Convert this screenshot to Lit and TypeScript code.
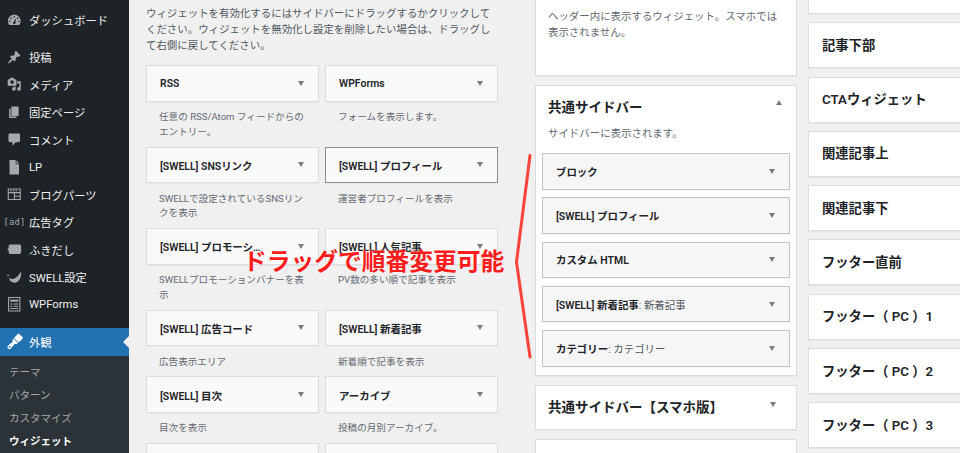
import { LitElement, html, css, svg } from "lit";
import { customElement } from "lit/decorators.js";

const P: Record<string, any> = {
  dash: svg`<path fill-rule="evenodd" d="M3.300 16.600C2 15.100 1.200 13.100 1.200 11 1.200 6.100 5.100 2.500 10 2.500s8.800 3.600 8.800 8.500c0 2.100-.8 4.100-2.100 5.600zM10 4a1.100 1.100 0 1 0 0 2.200A1.100 1.100 0 0 0 10 4zM5.300 6a1.100 1.100 0 1 0 0 2.200 1.100 1.100 0 0 0 0-2.200zM14.700 6a1.100 1.100 0 1 0 0 2.200 1.100 1.100 0 0 0 0-2.200zM3.500 10.200a1.100 1.100 0 1 0 0 2.200 1.100 1.100 0 0 0 0-2.200zM16.500 10.200a1.100 1.100 0 1 0 0 2.200 1.100 1.100 0 0 0 0-2.200zM12.600 7.200l-3.300 4.700a1.800 1.800 0 1 0 2.400.9z"/>`,
  pin: svg`<path d="M10.440 3.020l1.820-1.820 6.360 6.350-1.830 1.820c-1.050-.68-2.480-.57-3.410.36l-.75.75c-.92.93-1.040 2.350-.35 3.410l-1.830 1.820-2.410-2.410-2.800 2.790c-.42.42-3.380 2.710-3.800 2.290s1.860-3.390 2.280-3.810l2.790-2.790L4.100 9.360l1.830-1.820c1.050.69 2.480.57 3.400-.36l.75-.75c.93-.92 1.050-2.350.36-3.410z"/>`,
  media: svg`<path fill-rule="evenodd" d="M13 11V4c0-.55-.45-1-1-1h-1.670L9 1H5L3.670 3H2c-.55 0-1 .45-1 1v7c0 .55.45 1 1 1h10c.55 0 1-.45 1-1zM7 4.500a2.500 2.500 0 1 1 0 5 2.500 2.500 0 0 1 0-5zM14 6h5v10.500a2.500 2.500 0 1 1-2-2.450V9h-3V6zm-4 8.050V13h2v3.500a2.500 2.500 0 1 1-2-2.450z"/>`,
  page: svg`<path d="M6 15V2h10v13H6zm-1 1h8v2H3V5h2v11z"/>`,
  comment: svg`<path d="M4 2h12c1.100 0 2 .9 2 2v8c0 1.100-.9 2-2 2h-4l-4.500 5v-5H4c-1.100 0-2-.9-2-2V4c0-1.100.9-2 2-2z"/>`,
  doc: svg`<path d="M3.500 0h8.500v6h4.500v14h-13zM13 .4L16.500 4.800H13z"/>`,
  parts: svg`<path fill-rule="evenodd" d="M1 2h18v16H1zM2.500 3.500V7h15V3.500zM4.200 4.500h2.500V6H4.200zM8 4.500h2.500V6H8zM11.800 4.500h2.500V6h-2.500zM2.500 8.500v8h7v-8zM11 8.500V12h6.500V8.500zM11 13.500v3h6.500v-3z"/>`,
  bubble: svg`<path d="M4.500 3.500h12.800c1.200 0 2.200 1 2.200 2.200v8.600c0 1.200-1 2.200-2.200 2.200H4.500c-1.200 0-2.200-1-2.200-2.200v-2.800L0 10l2.300-1.500V5.700c0-1.200 1-2.200 2.200-2.200z"/>`,
  swell: svg`<path d="M19.500 2c.8 7.300-2.500 15.500-9.500 15.500-4 0-6.800-3-7-7 2 1.800 4.900 2.300 7.500 1.100C14 10 16.700 6.200 19.500 2zM1.400 6.200a1.200 1.200 0 1 1 0 2.400 1.200 1.200 0 0 1 0-2.400z"/>`,
  wpf: svg`<path fill-rule="evenodd" d="M1.500 0h17v20h-17zM3 1.500v17h14v-17zM4.500 2.500l1.500 1.800 1.300-1.300 1.300 1.300L10 3l1.400 1.300L12.700 3 14 4.300l1.500-1.800v4H4.500zM4.500 9h3v1.500h-3zM9 9h6.500v1.500H9zM4.500 12h3v1.500h-3zM9 12h6.500v1.500H9zM4.500 15h11v1.500h-11z"/>`,
  brush: svg`<g transform="rotate(45 10 10)"><path fill-rule="evenodd" d="M5.500-1.500c0-.8.7-1.500 1.500-1.500h6c.8 0 1.500.7 1.500 1.500V6h-9zM6 7h8v2.800l-2 .9.700 8.800a2.700 2.700 0 0 1-5.400 0L8 10.700l-2-.9zM10 18a1.200 1.200 0 1 0 0 2.400A1.200 1.200 0 0 0 10 18z"/></g>`,
};

const ic = (k: string) => html`<svg class="ic" viewBox="0 0 20 20" fill="currentColor">${P[k]}</svg>`;

const menu: [string, string][] = [
  ["pin", "投稿"], ["media", "メディア"], ["page", "固定ページ"], ["comment", "コメント"], ["doc", "LP"],
  ["parts", "ブログパーツ"], ["ad", "広告タグ"], ["bubble", "ふきだし"], ["swell", "SWELL設定"], ["wpf", "WPForms"],
];

const rows: [string, string, string, string][] = [
  ["RSS", "任意の RSS/Atom フィードからのエントリー。", "WPForms", "フォームを表示します。"],
  ["[SWELL] SNSリンク", "SWELLで設定されているSNSリンクを表示", "[SWELL] プロフィール", "運営者プロフィールを表示"],
  ["[SWELL] プロモーションバナー", "SWELLプロモーションバナーを表示", "[SWELL] 人気記事", "PV数の多い順で記事を表示"],
  ["[SWELL] 広告コード", "広告表示エリア", "[SWELL] 新着記事", "新着順で記事を表示"],
  ["[SWELL] 目次", "目次を表示", "アーカイブ", "投稿の月別アーカイブ。"],
  ["", "", "", ""],
];

const inner: [string, string][] = [
  ["ブロック", ""], ["[SWELL] プロフィール", ""], ["カスタム HTML", ""],
  ["[SWELL] 新着記事", ": 新着記事"], ["カテゴリー", ": カテゴリー"],
];

const right = ["", "記事下部", "CTAウィジェット", "関連記事上", "関連記事下", "フッター直前", "フッター（ PC ）1", "フッター（ PC ）2", "フッター（ PC ）3"];

@customElement("app-root")
export class AppRoot extends LitElement {
  static styles = css`
    :host { display: block; width: 960px; height: 453px; overflow: hidden; background: #f0f0f1; position: relative;
      font-family: Roboto, "Noto Sans CJK JP", sans-serif; font-size: 10.45px; color: #1d2327; }
    .page { display: flex; height: 453px; overflow: hidden; }
    .side { width: 129px; flex: none; background: #1d2327; color: #f0f0f1; display: flex; flex-direction: column; font-size: 11.3px; }
    .mi { height: 27.5px; flex: none; display: flex; align-items: center; }
    .dash { margin-top: 6.25px; margin-bottom: 9.5px; }
    .icw { width: 29px; flex: none; display: flex; justify-content: center; color: #a7aaad; }
    .ic { width: 14.5px; height: 14.5px; display: block; overflow: visible; }
    .adic { letter-spacing: .2px; color: #a7aaad; font-family: "DejaVu Sans Mono", monospace; font-size: 8.8px; }
    .cur { margin-top: 9.75px; background: #2271b1; color: #fff; position: relative; font-weight: 400; }
    .cur .icw { color: #fff; }
    .cur::after { content: ""; position: absolute; right: 0; top: 8px; border: 6px solid transparent; border-right-color: #f0f0f1; border-left-width: 0; }
    .sub { background: #2c3338; flex: 1; padding-top: 5.5px; font-size: 10.5px; color: #a5a9ac; }
    .sub div { height: 23px; line-height: 23px; padding-left: 9px; }
    .sub .on { color: #fff; font-weight: 700; }

    .left { width: 352px; flex: none; margin-left: 17px; padding-top: 6px; }
    .intro { margin: 0 0 11px; line-height: 16px; color: #50575e; }
    .grid { display: grid; grid-template-columns: 173px 173px; column-gap: 6px; }
    .card { height: 36.5px; box-sizing: border-box; border: 1px solid #dcdcde; background: #f9f9f9; display: flex; align-items: center;
      padding: 0 14px 0 13px; font-weight: 600; color: #1d2327; justify-content: space-between; box-shadow: 0 1px 1px rgba(0,0,0,.03); }
    .card.focus { border-color: #8c8f94; }
    .t { white-space: nowrap; overflow: hidden; text-overflow: ellipsis; max-width: 135px; padding-top: 1px; }
    .t.long { max-width: 103px; }
    .t span { font-weight: 400; color: #50575e; }
    .arr { width: 0; height: 0; flex: none; border-style: solid; border-width: 5px 3.5px 0; border-color: #787c82 transparent transparent; }
    .arr.up { border-width: 0 3.5px 5px; border-color: transparent transparent #787c82; }
    .desc { margin: 0; padding: 8.5px 0 7px 13px; font-size: 9.6px; line-height: 14.75px; color: #646970; width: 147px; }

    .mid { width: 262px; flex: none; margin-left: 37px; display: flex; flex-direction: column; gap: 9px; }
    .box { background: #fff; border: 1px solid #dcdcde; box-sizing: border-box; box-shadow: 0 1px 1px rgba(0,0,0,.04); flex: none; }
    .top { border-top: 0; height: 75.5px; padding: 9px 12px 0; color: #646970; line-height: 16px; }
    .top p, .sb p { margin: 0; }
    .sb { height: 291px; padding: 0 6px; }
    .sbh { height: 40px; padding: 0 8px 0 6px; display: flex; align-items: center; justify-content: space-between; font-weight: 700; font-size: 13.5px; }
    .sbh .arr { margin-top: -6px; }
    .sb p { padding-left: 6px; line-height: 16px; color: #646970; margin-bottom: 11.5px; }
    .inner { display: flex; flex-direction: column; gap: 7.8px; }
    .inner .card { background: #f6f6f6; border-color: #c3c4c7; padding-right: 14px; }
    .inner .t { max-width: none; padding-top: 0; }
    .closed { height: 45px; padding: 0 20px 0 12px; display: flex; align-items: center; justify-content: space-between; font-weight: 700; font-size: 13.5px; }
    .closed span { margin-top: -2px; }
    .closed .arr { margin-top: -6px; }
    .blank { height: 40px; }

    .rt { width: 262px; flex: none; margin-left: 11px; display: flex; flex-direction: column; gap: 8.3px; }
    .rb { height: 46px; padding: 0 0 2px 13px; display: flex; align-items: center; font-weight: 600; font-size: 13.3px; }
    .rb.first { height: 14px; border-top: 0; padding: 0; }

    .drag { position: absolute; left: 243px; top: 245px; font-size: 23.75px; line-height: 34px; font-weight: 700; color: #fb1c1c; white-space: nowrap;
      text-shadow: 0 0 2px rgba(255,255,255,.75); }
    .bracket { position: absolute; left: 510px; top: 150px; width: 26px; height: 215px; }
  `;

  render() {
    return html`
      <div class="page">
        <nav class="side">
          <div class="mi dash"><span class="icw">${ic("dash")}</span>ダッシュボード</div>
          ${menu.map(([k, t]) => html`<div class="mi"><span class="icw">${k === "ad" ? html`<span class="adic">[ad]</span>` : ic(k)}</span>${t}</div>`)}
          <div class="mi cur"><span class="icw">${ic("brush")}</span>外観</div>
          <div class="sub">
            <div>テーマ</div><div>パターン</div><div>カスタマイズ</div><div class="on">ウィジェット</div>
          </div>
        </nav>

        <section class="left">
          <p class="intro">ウィジェットを有効化するにはサイドバーにドラッグするかクリックして<br>ください。ウィジェットを無効化し設定を削除したい場合は、ドラッグし<br>て右側に戻してください。</p>
          <div class="grid">
            ${rows.map(([a, ad, b, bd]) => html`
              <div>
                <div class="card"><span class="t ${a.length > 16 ? "long" : ""}">${a}</span>${a ? html`<i class="arr"></i>` : ""}</div>
                <p class="desc">${ad}</p>
              </div>
              <div>
                <div class="card ${b === "[SWELL] プロフィール" ? "focus" : ""}"><span class="t">${b}</span>${b ? html`<i class="arr"></i>` : ""}</div>
                <p class="desc">${bd}</p>
              </div>`)}
          </div>
        </section>

        <section class="mid">
          <div class="box top"><p>ヘッダー内に表示するウィジェット。スマホでは<br>表示されません。</p></div>
          <div class="box sb">
            <div class="sbh"><span>共通サイドバー</span><i class="arr up"></i></div>
            <p>サイドバーに表示されます。</p>
            <div class="inner">
              ${inner.map(([t, s]) => html`<div class="card"><span class="t">${t}<span>${s}</span></span><i class="arr"></i></div>`)}
            </div>
          </div>
          <div class="box closed"><span>共通サイドバー【スマホ版】</span><i class="arr"></i></div>
          <div class="box blank"></div>
        </section>

        <section class="rt">
          ${right.map((t, i) => html`<div class="box rb ${i === 0 ? "first" : ""}">${t}</div>`)}
        </section>
      </div>

      <div class="drag">ドラッグで順番変更可能</div>
      <svg class="bracket" viewBox="0 0 26 215" fill="none">
        <path d="M20 5.500 L6.500 112 L20 207" stroke="#f9433b" stroke-width="3" stroke-linecap="round" stroke-linejoin="round"/>
      </svg>
    `;
  }
}
